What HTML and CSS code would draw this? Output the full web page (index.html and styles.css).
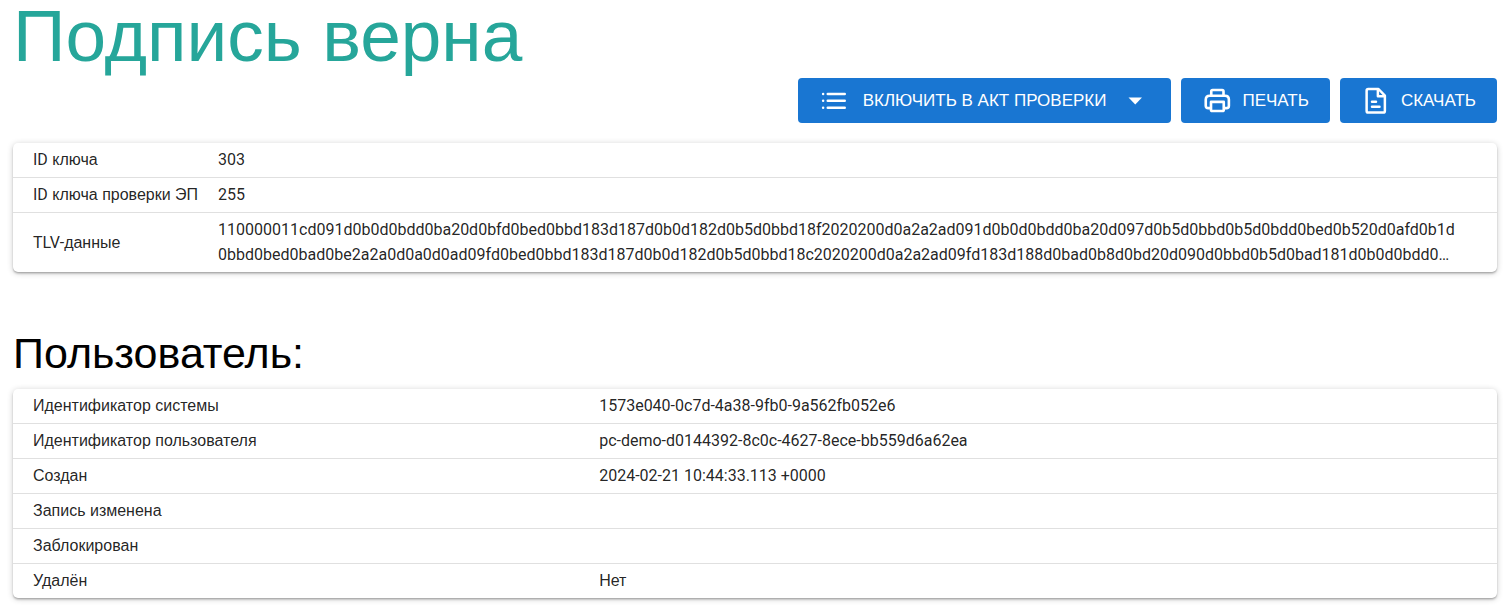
FILE: index.html
```html
<!DOCTYPE html>
<html lang="ru">
<head>
    <meta charset="UTF-8">
    <meta name="viewport" content="width=device-width, initial-scale=1.0">
    <title>Подпись верна</title>
    <link rel="stylesheet" href="styles.css">
</head>
<body>
    <main class="page">
        <h1 class="title">Подпись верна</h1>

        <!-- Кнопки действий -->
        <div class="toolbar">
            <button type="button" class="btn btn-menu">
                <svg class="icon" viewBox="0 0 24 24" fill="currentColor">
                    <circle cx="3.300" cy="6.300" r="1"/>
                    <circle cx="3.300" cy="11.800" r="1"/>
                    <circle cx="3.300" cy="17.300" r="1"/>
                    <rect x="6" y="5.300" width="15.600" height="2" rx="1"/>
                    <rect x="6" y="10.800" width="15.600" height="2" rx="1"/>
                    <rect x="6" y="16.300" width="15.600" height="2" rx="1"/>
                </svg>
                <span>Включить в акт проверки</span>
                <svg class="icon" viewBox="0 0 24 24" fill="currentColor"><path d="M6.800 9.200h10.800l-5.400 5.600z"/></svg>
            </button>
            <button type="button" class="btn">
                <svg class="icon" viewBox="0 0 24 24" fill="none" stroke="currentColor" stroke-width="2.100" stroke-linejoin="round">
                    <path d="M7.400 7.500V4.300q0-1.100 1.100-1.100h7.600q1.100 0 1.100 1.100v3.200"/>
                    <path d="M7 17.700H5Q3 17.700 3 15.700V10.900q0-3.100 3.100-3.100h12.300q3.100 0 3.100 3.100v4.800q0 2-2 2h-2"/>
                    <path d="M7.200 12.700h10.200v6.200q0 1.100-1.100 1.100H8.300q-1.100 0-1.100-1.100z"/>
                </svg>
                <span>Печать</span>
            </button>
            <button type="button" class="btn">
                <svg class="icon" viewBox="0 0 24 24" fill="none" stroke="currentColor" stroke-width="2" stroke-linejoin="round" stroke-linecap="round">
                    <path d="M14 2.400H5.800q-1.300 0-1.300 1.300v16.200q0 1.300 1.300 1.300h12q1.300 0 1.300-1.300V7.700z"/>
                    <path d="M13.500 3v5.200h5.200"/>
                    <path d="M8.800 12.600h3.200M8.800 16.600h6"/>
                </svg>
                <span>Скачать</span>
            </button>
        </div>

        <!-- Данные ключа -->
        <table class="card key-table">
            <tbody>
                <tr>
                    <th scope="row"><span class="latin">ID</span> ключа</th>
                    <td>303</td>
                </tr>
                <tr>
                    <th scope="row"><span class="latin">ID</span> ключа проверки ЭП</th>
                    <td>255</td>
                </tr>
                <tr>
                    <th scope="row"><span class="latin">TLV-</span>данные</th>
                    <td>110000011cd091d0b0d0bdd0ba20d0bfd0bed0bbd183d187d0b0d182d0b5d0bbd18f2020200d0a2a2ad091d0b0d0bdd0ba20d097d0b5d0bbd0b5d0bdd0bed0b520d0afd0b1d<br>0bbd0bed0bad0be2a2a0d0a0d0ad09fd0bed0bbd183d187d0b0d182d0b5d0bbd18c2020200d0a2a2ad09fd183d188d0bad0b8d0bd20d090d0bbd0b5d0bad181d0b0d0bdd0…</td>
                </tr>
            </tbody>
        </table>

        <!-- Данные пользователя -->
        <h2 class="subtitle">Пользователь:</h2>
        <table class="card user-table">
            <tbody>
                <tr>
                    <th scope="row">Идентификатор системы</th>
                    <td>1573e040-0c7d-4a38-9fb0-9a562fb052e6</td>
                </tr>
                <tr>
                    <th scope="row">Идентификатор пользователя</th>
                    <td>pc-demo-d0144392-8c0c-4627-8ece-bb559d6a62ea</td>
                </tr>
                <tr>
                    <th scope="row">Создан</th>
                    <td>2024-02-21 10:44:33.113 +0000</td>
                </tr>
                <tr>
                    <th scope="row">Запись изменена</th>
                    <td></td>
                </tr>
                <tr>
                    <th scope="row">Заблокирован</th>
                    <td></td>
                </tr>
                <tr>
                    <th scope="row">Удалён</th>
                    <td class="cyrillic">Нет</td>
                </tr>
            </tbody>
        </table>
    </main>
</body>
</html>
```
FILE: styles.css
```css
body {
    margin: 0;
    background-color: #ffffff;
    color: #000000;
    font-family: "Liberation Sans", Arial, sans-serif;
    font-size: 16px;
}
.page {
    padding: 0 6px 16px 13px;
}
.title {
    margin: 0;
    color: #26a69a;
    font-size: 73px;
    font-weight: 400;
    line-height: 72px;
}
/* Кнопки */
.toolbar {
    display: flex;
    justify-content: flex-end;
    gap: 10px;
    margin: 6px 0 20px;
}
.btn {
    display: flex;
    align-items: center;
    gap: 10px;
    height: 45px;
    padding: 0 21px;
    border: none;
    border-radius: 4px;
    background-color: #1976d2;
    color: #ffffff;
    font-family: inherit;
    font-size: 17px;
    text-transform: uppercase;
    cursor: pointer;
}
.btn:hover {
    background-color: #1565c0;
}
.btn-menu {
    gap: 14px;
}
.icon {
    width: 30px;
    height: 30px;
}
/* Таблицы */
.card {
    width: 100%;
    border-spacing: 0;
    border-radius: 5px;
    box-shadow: 0 1px 6px rgba(0, 0, 0, 0.2), 0 2px 2px rgba(0, 0, 0, 0.14), 0 1px 1px rgba(0, 0, 0, 0.12);
}
.card th,
.card td {
    padding: 4px 20px 5px;
    border-bottom: 1px solid #e0e0e0;
    line-height: 25px;
    height: 25px;
    text-align: left;
    font-weight: 400;
    color: rgba(0, 0, 0, 0.87);
}
.card td {
    font-family: Roboto, "Liberation Sans", sans-serif;
    padding-left: 0;
}
.card .cyrillic {
    font-family: "Liberation Sans", Arial, sans-serif;
}
.card tr:last-child th,
.card tr:last-child td {
    border-bottom: none;
}
.card th {
    white-space: nowrap;
}
.latin {
    font-family: Roboto, sans-serif;
}
.key-table th {
    width: 1%;
}
.user-table th {
    width: 39.5%;
}
/* Заголовок раздела */
.subtitle {
    margin: 56px 0 11px;
    font-size: 43px;
    font-weight: 400;
    line-height: 50px;
}
```
